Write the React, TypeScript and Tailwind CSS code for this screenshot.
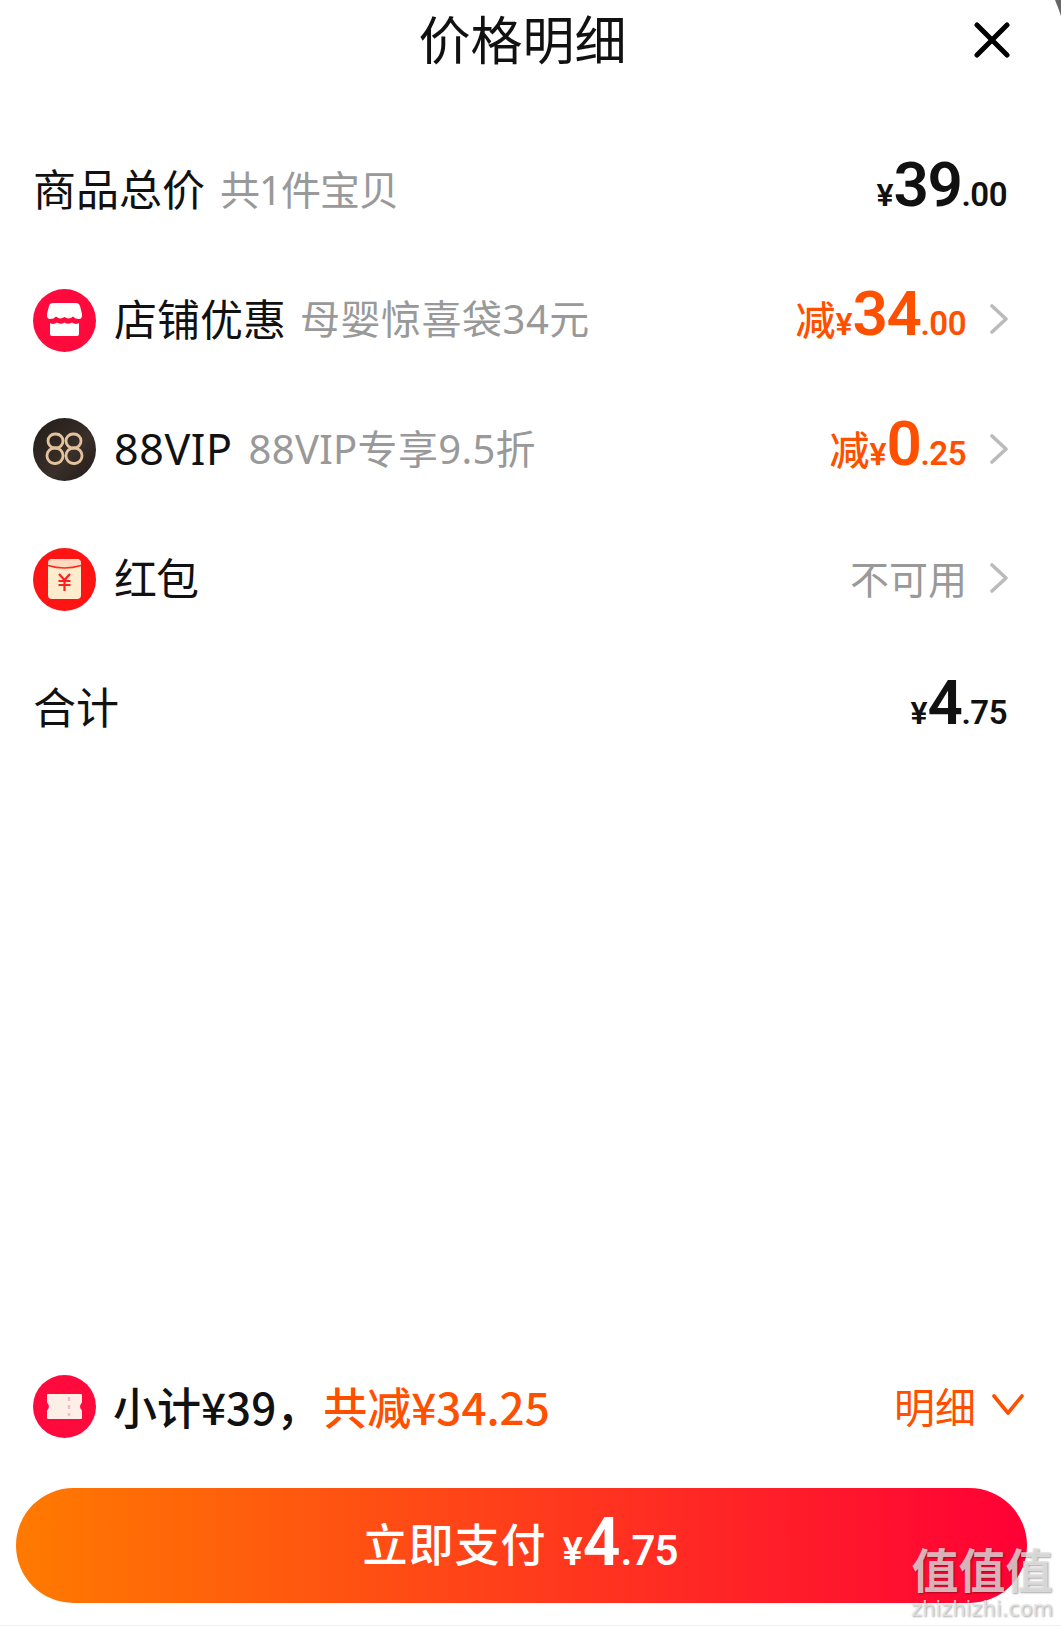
import React from "react";

const cjk = "font-['Noto_Sans_CJK_SC','Noto_Sans',sans-serif]";
const latin = "font-['Noto_Sans','Noto_Sans_CJK_SC',sans-serif]";
const din = "font-['Roboto','Noto_Sans_CJK_SC',sans-serif]";

function Chevron() {
  return (
    <svg width="18" height="30" viewBox="0 0 18 30" className="mb-[2px] ml-[23px] shrink-0" fill="none">
      <path d="M2 2 L16 15 L2 28" stroke="#bbbbbb" strokeWidth="3.6" strokeLinecap="round" strokeLinejoin="round" />
    </svg>
  );
}

function Price({ big, small, prefix, color }: { big: string; small: string; prefix?: string; color: string }) {
  return (
    <span className={`flex items-baseline pb-[12px] font-bold leading-none ${din} ${color}`}>
      {prefix ? <span className={`text-[40px] font-medium ${cjk}`}>{prefix}</span> : null}
      <span className="text-[32px] font-semibold">¥</span>
      <span className="text-[62px] font-semibold tracking-[-1.5px]">{big}</span>
      <span className="mr-[1px] text-[33px] font-semibold tracking-[-0.5px]">{small}</span>
    </span>
  );
}

function ShopIcon() {
  return (
    <svg width="63" height="63" viewBox="0 0 63 63" className="shrink-0">
      <circle cx="31.5" cy="31.5" r="31.5" fill="#ff0a3c" />
      <path d="M20 14 H43 Q46 14 47 17 L49 25 Q49.5 30 46 30 Q42 30 40 27.5 Q36 31 31.5 28 Q27 31 23 27.5 Q21 30 17 30 Q13.5 30 14 25 L16 17 Q17 14 20 14 Z" fill="#fff" />
      <path d="M17 34 Q20.5 36 24 33.5 Q28 36 31.5 33.5 Q35 36 39 33.5 Q42.5 36 46 34 V45 Q46 47 44 47 H19 Q17 47 17 45 Z" fill="#fff" />
    </svg>
  );
}

function VipIcon() {
  return (
    <svg width="63" height="63" viewBox="0 0 63 63" className="shrink-0">
      <defs>
        <linearGradient id="vipbg" x1="0" y1="0" x2="1" y2="1">
          <stop offset="0" stopColor="#221c19" />
          <stop offset="0.6" stopColor="#3a2f29" />
          <stop offset="1" stopColor="#1f1a18" />
        </linearGradient>
      </defs>
      <circle cx="31.5" cy="31.5" r="31.5" fill="url(#vipbg)" />
      <g fill="none" stroke="#e3c39d" strokeWidth="2.8">
        <rect x="15" y="16" width="15" height="14" rx="7" />
        <rect x="14" y="30" width="16" height="15.5" rx="7.5" />
        <rect x="33" y="16" width="15" height="14" rx="7" />
        <rect x="33" y="30" width="16" height="15.5" rx="7.5" />
      </g>
    </svg>
  );
}

function PacketIcon() {
  return (
    <svg width="63" height="63" viewBox="0 0 63 63" className="shrink-0">
      <circle cx="31.5" cy="31.5" r="31.5" fill="#ff1414" />
      <rect x="15" y="11" width="33" height="40" rx="4" fill="#ffeccd" />
      <path d="M15 17 Q15 11 20 11 H43 Q48 11 48 17 Q31.5 22 15 17 Z" fill="#ffd9c0" />
      <path d="M15 17.5 Q31.5 22.5 48 17.5" fill="none" stroke="#ff2a1c" strokeWidth="1.6" />
      <path d="M26 26 L31.5 32 L37 26 M25.5 33 H37.5 M25.5 37 H37.5 M31.5 32 V43" fill="none" stroke="#ff2020" strokeWidth="2.2" />
    </svg>
  );
}

function TicketIcon() {
  return (
    <svg width="63" height="63" viewBox="0 0 63 63" className="shrink-0">
      <circle cx="31.5" cy="31.5" r="31.5" fill="#ff0a3c" />
      <path d="M15 20 H48 V27 Q44 31.5 48 36 V43 H15 V36 Q19 31.5 15 27 Z" fill="#fdeee8" stroke="#fdeee8" strokeWidth="2" strokeLinejoin="round" />
      <path d="M36 22 V41" stroke="#f8bcc0" strokeWidth="2.4" strokeDasharray="4 4" />
    </svg>
  );
}

function Row({ left, right }: { left: React.ReactNode; right: React.ReactNode }) {
  return (
    <div className="flex h-[129.5px] items-center justify-between pl-[33px] pr-[53px]">
      <div className="flex items-center">{left}</div>
      <div className="flex items-center">{right}</div>
    </div>
  );
}

function Label({
  main,
  sub,
  icon,
  mainClass = "",
  subClass = "ml-[15px]",
}: {
  main: string;
  sub?: string;
  icon?: React.ReactNode;
  mainClass?: string;
  subClass?: string;
}) {
  return (
    <>
      {icon}
      <span className={`pb-[2px] text-[43px] leading-none text-[#111] ${latin} ${icon ? "ml-[18px]" : ""} ${mainClass}`}>{main}</span>
      {sub ? <span className={`pb-[2px] text-[40px] leading-none text-[#999] ${latin} ${subClass}`}>{sub}</span> : null}
    </>
  );
}

export default function App() {
  return (
    <div className={`relative flex h-[1626px] w-[1061px] flex-col overflow-hidden border-b border-[#f0f0f0] bg-white ${cjk}`}>
      <header className="relative flex h-[80px] shrink-0 items-center justify-center pb-[5px] pr-[16px]">
        <h1 className="text-[52px] font-normal leading-none text-[#111]">价格明细</h1>
        <svg width="36" height="36" viewBox="0 0 36 36" className="absolute right-[51px] top-[22px]" fill="none">
          <path d="M3 3 L33 33 M33 3 L3 33" stroke="#000" strokeWidth="5" strokeLinecap="round" />
        </svg>
      </header>

      <main className="mt-[46px] flex flex-col">
        <Row
          left={<Label main="商品总价" sub="共1件宝贝" subClass="ml-[15px] tracking-[-1px]" />}
          right={<Price big="39" small=".00" color="text-[#111]" />}
        />
        <Row
          left={<Label main="店铺优惠" sub="母婴惊喜袋34元" subClass="ml-[14px] tracking-[0.5px]" icon={<ShopIcon />} />}
          right={<><Price prefix="减" big="34" small=".00" color="text-[#ff5000]" /><Chevron /></>}
        />
        <Row
          left={<Label main="88VIP" sub="88VIP专享9.5折" mainClass="tracking-[0.6px]" subClass="ml-[16px] tracking-[0.3px]" icon={<VipIcon />} />}
          right={<><Price prefix="减" big="0" small=".25" color="text-[#ff5000]" /><Chevron /></>}
        />
        <Row
          left={<Label main="红包" mainClass="tracking-[-1px]" icon={<PacketIcon />} />}
          right={<><span className="pb-[4px] text-[39px] leading-none text-[#999]">不可用</span><Chevron /></>}
        />
        <Row
          left={<Label main="合计" />}
          right={<Price big="4" small=".75" color="text-[#111]" />}
        />
      </main>

      <footer className="mt-auto flex flex-col pb-[22px]">
        <div className="flex items-center justify-between pl-[33px] pr-[37px]">
          <div className="flex items-center">
            <TicketIcon />
            <span className="ml-[17px] pb-[2px] text-[44px] font-medium leading-none text-[#111]">小计¥39，</span>
            <span className="ml-[3px] pb-[2px] text-[44px] font-medium leading-none text-[#ff5000]">共减¥34.25</span>
          </div>
          <div className="flex items-center">
            <span className="pb-[3px] text-[41px] leading-none text-[#ff5000]">明细</span>
            <svg width="32" height="22" viewBox="0 0 32 22" className="mb-[3px] ml-[16px]" fill="none">
              <path d="M2 2 L16 19 L30 2" stroke="#ff5000" strokeWidth="3.6" strokeLinecap="round" strokeLinejoin="round" />
            </svg>
          </div>
        </div>
        <button className="mx-[16px] mt-[50px] flex h-[115px] w-[1011px] items-center justify-center rounded-full bg-linear-to-r/srgb from-[#ff7a00] to-[#ff0036] text-white">
          <span className="pb-[6px] text-[45px] font-medium leading-none tracking-[1px]">立即支付</span>
          <span className={`ml-[16px] flex items-baseline pb-[6px] font-bold leading-none ${din}`}>
            <span className="text-[38px] font-semibold">¥</span>
            <span className="text-[66px] font-semibold">4</span>
            <span className="mr-[3px] text-[42px] font-semibold tracking-[-1px]">.75</span>
          </span>
        </button>
      </footer>

      <svg width="6" height="18" viewBox="0 0 6 18" className="absolute right-0 top-0">
        <path d="M0 0 H6 V16 Q3 7 0 0 Z" fill="#666" />
      </svg>

      <div className="pointer-events-none absolute left-[911px] top-[1538px] flex flex-col items-center text-[rgba(228,228,228,0.78)] [text-shadow:1px_1px_2px_rgba(0,0,0,0.35)]">
        <span className="text-[47px] font-bold leading-[60px]">值值值</span>
        <span className="font-['DejaVu_Sans',sans-serif] text-[21px] leading-[22px]">zhizhizhi.com</span>
      </div>
    </div>
  );
}
